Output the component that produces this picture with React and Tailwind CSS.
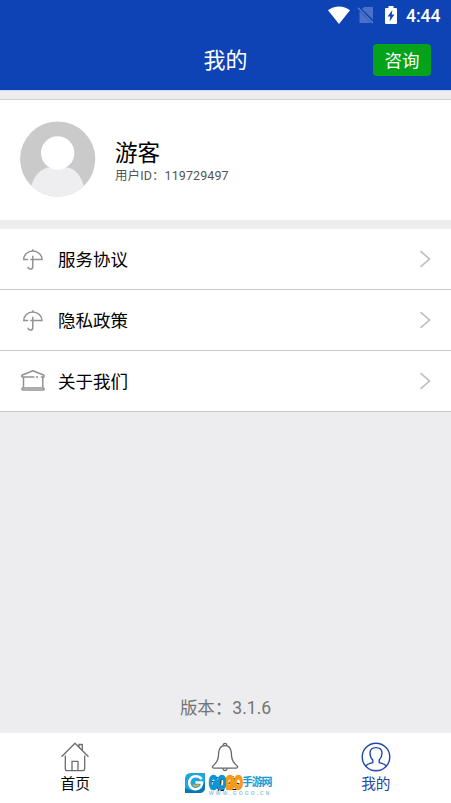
import React from 'react';

const menuItems = [
  { label: '服务协议', icon: 'umbrella' },
  { label: '隐私政策', icon: 'umbrella' },
  { label: '关于我们', icon: 'house' },
];

const UmbrellaIcon = () => (
  <svg width="24" height="24" viewBox="0 0 24 24" fill="none" stroke="#929292" strokeWidth="1.5">
    <path d="M2.7 12.8C2.7 7.5 6.7 4.1 11.8 4.1S21 7.5 21 12.8M2.1 12.6H7.2M9.3 12.6H21.6M11.8 2.3V4.1M11.8 8.8V19.7C11.8 22.9 7 22.9 7 19.7" />
  </svg>
);

const HouseIcon = () => (
  <svg width="24" height="24" viewBox="0 0 24 24" fill="none" stroke="#929292" strokeWidth="1.5" strokeLinejoin="round">
    <path d="M.8 7.9V6.2L11.9 1.7L23 6.2V7.9H19.8M.8 7.9H13.5M15 7.9H17M2.5 7.9V18.7M21.8 7.9V18.7" />
    <rect x=".9" y="18.9" width="22.3" height="2.2" rx="1" />
  </svg>
);

const ChevronIcon = () => (
  <svg width="12" height="18" viewBox="0 0 12 18" fill="none" stroke="#bcbcbc" strokeWidth="1.6">
    <path d="M1.5 1.2L10.5 9L1.5 16.8" />
  </svg>
);

const StatusBar = () => (
  <div className="flex h-[30px] items-center text-white">
    <svg className="ml-[328px] -mt-px" width="22" height="18" viewBox="0 0 22 18" fill="currentColor">
      <path d="M0 4.3C6-.9 16-.9 22 4.3L11 18Z" />
    </svg>
    <svg className="ml-[7px]" width="18" height="18" viewBox="0 0 18 18">
      <path d="M7 1H16V13.5L5 3Z M2.5 5L14.5 17H2.5Z" fill="#4a70c8" />
      <path d="M1 1.7L16 17" stroke="#5b7dca" strokeWidth="1.3" />
    </svg>
    <svg className="ml-[10px]" width="12" height="18" viewBox="0 0 12 18">
      <path d="M3.5 0H8.5V2H11Q12 2 12 3V17Q12 18 11 18H1Q0 18 0 17V3Q0 2 1 2H3.5Z" fill="white" />
      <path d="M7.4 4L2.6 10.6H5.3L4.6 15.5L9.4 8.6H6.7Z" fill="#0e43b5" />
    </svg>
    <span className="ml-[9px] mt-[3px] font-['Roboto'] text-[17.5px] font-medium leading-none">4:44</span>
  </div>
);

const Header = () => (
  <header className="h-[91px] shrink-0 border-b border-[#ccd8f5] bg-[#0e43b5]">
    <StatusBar />
    <div className="grid h-[60px] grid-cols-3 items-center">
      <h1 className="col-start-2 -mt-[4px] text-center text-[22px] leading-none text-white">我的</h1>
      <button className="mr-5 flex h-8 w-[58px] items-center justify-center justify-self-end rounded-[4px] bg-[#05a31c] text-[17.5px] leading-none text-white">
        咨询
      </button>
    </div>
  </header>
);

const Profile = () => (
  <section className="flex h-[121px] shrink-0 border-t border-[#d2d2d2] bg-white pl-5">
    <svg className="mt-[21px]" width="76" height="76" viewBox="0 0 76 76">
      <defs>
        <clipPath id="avatar">
          <circle cx="37.7" cy="38" r="37.6" />
        </clipPath>
      </defs>
      <g clipPath="url(#avatar)">
        <rect width="76" height="76" fill="#cacaca" />
        <path d="M10 70C13 54 22 46.5 30 46.5H46C54 46.5 62 54 65 70V76H10Z" fill="#eeeef0" />
        <circle cx="37.7" cy="32" r="16.7" fill="white" />
      </g>
    </svg>
    <div className="ml-[19px] pt-[38px]">
      <h2 className="text-[22.5px] leading-[26px] text-black">游客</h2>
      <p className="mt-[4px] font-['Roboto','Noto_Sans_CJK_SC',sans-serif] text-[12.5px] leading-4 tracking-[0.1px] text-[#555]">用户ID：119729497</p>
    </div>
  </section>
);

const HomeIcon = () => (
  <svg width="30" height="30" viewBox="0 0 30 30" fill="none" stroke="#6b6b6b" strokeWidth="1.3" strokeLinejoin="round">
    <path d="M1.5 14.7L15 1.2L28.5 14.7M19 5V2.5H22.3V8.2M5.3 13.5V26.5Q5.3 28.7 7.5 28.7H22.5Q24.7 28.7 24.7 26.5V13.5M12 28.5V19.3H18V28.5" />
  </svg>
);

const BellIcon = () => (
  <svg width="30" height="30" viewBox="0 0 30 30" fill="none" stroke="#666" strokeWidth="1.3" strokeLinejoin="round">
    <path d="M15 3.7C9.8 3.7 8.5 8 8.5 13C8.5 18.5 6 21.5 2.5 24.2Q2.1 26.1 4 26.1H26Q27.9 26.1 27.5 24.2C24 21.5 21.5 18.5 21.5 13C21.5 8 20.2 3.7 15 3.7Z" />
    <path d="M13.3 3.8A1.8 1.8 0 1 1 16.7 3.8M12.4 26.3Q15 31 17.6 26.3" />
  </svg>
);

const UserIcon = () => (
  <svg width="30" height="30" viewBox="0 0 30 30" fill="none" stroke="#2148a4" strokeWidth="1.4" strokeLinejoin="round">
    <circle cx="15" cy="15" r="13.8" />
    <path d="M4.5 24C6.5 21.7 9 21.3 11.8 20.5V18C9.8 16 9 13.5 9 11C9 7.5 11 5.6 15 5.6S21 7.5 21 11C21 13.5 20.2 16 18.2 18V20.5C21 21.3 23.5 21.7 25.5 24" />
  </svg>
);

const Watermark = () => (
  <div className="absolute left-[185px] top-[40px] flex h-[26px] w-[88px]">
    <svg className="shrink-0" width="21" height="20" viewBox="0 0 21 20">
      <path d="M6 0H20V14Q20 20 14 20H0V6Q0 0 6 0Z" fill="#1fa6dc" />
      <path d="M0 15Q12 22 20 9V14Q20 20 14 20H0Z" fill="#0876b4" />
      <path d="M16.6 6.2C13.6 2.3 7.6 2.5 5.2 6.3C2.4 11 6 16.6 11 16.3C14.8 16 17.3 13.1 17 9.6H10.5" fill="none" stroke="white" strokeWidth="2.5" />
      <path d="M8.2 11.6C9.6 13.4 12.2 13.2 13.6 11.6" fill="none" stroke="#ffa319" strokeWidth="1.8" />
    </svg>
    <div className="ml-[3px]">
      <div className="flex h-[18px] items-center whitespace-nowrap leading-none">
        <span className="w-[33px] font-['Liberation_Sans',sans-serif] text-[19px] font-bold">
          <span className="inline-block origin-left scale-x-[0.57]">
            <span className="text-[#0b95d5] [-webkit-text-stroke:2.6px_#0b95d5]">GO</span>
            <span className="text-[#f59b16] [-webkit-text-stroke:2.6px_#f59b16]">GO</span>
          </span>
        </span>
        <span className="-mt-px text-[11px] font-bold tracking-[-1.2px] text-[#159bd5]">手游网</span>
      </div>
      <div className="font-['Liberation_Sans',sans-serif] text-[5px] font-bold leading-[5px] tracking-[2.1px] text-[#8cc8e6]">WWW.GOGO.CN</div>
    </div>
  </div>
);

const TabBar = () => (
  <nav className="relative grid h-[70px] shrink-0 grid-cols-3 bg-white text-[14.7px] leading-none">
    <div className="flex flex-col items-center pt-[9px] text-black">
      <HomeIcon />
      <span className="mt-[4px]">首页</span>
    </div>
    <div className="flex flex-col items-center pt-[9px] text-black">
      <BellIcon />
      <span className="mt-[4px]">动态</span>
    </div>
    <div className="flex flex-col items-center pt-[9px] text-[#2148a4]">
      <UserIcon />
      <span className="mt-[4px]">我的</span>
    </div>
    <Watermark />
  </nav>
);

export default function App() {
  return (
    <div className="flex h-[803px] w-[451px] flex-col overflow-hidden bg-[#ededef] font-['Noto_Sans_CJK_SC',sans-serif]">
      <Header />
      <div className="h-2 shrink-0" />
      <Profile />
      <main className="mt-[9px] shrink-0">
        {menuItems.map((item) => (
          <button
            key={item.label}
            className="flex h-[61px] w-full items-center border-b border-[#c8c8c8] bg-white pl-[21px] pr-5"
          >
            {item.icon === 'umbrella' ? <UmbrellaIcon /> : <HouseIcon />}
            <span className="-mt-px ml-[13px] text-[17.5px] leading-none text-black">{item.label}</span>
            <span className="ml-auto">
              <ChevronIcon />
            </span>
          </button>
        ))}
      </main>
      <div className="flex flex-1 items-end justify-center pb-[15px] font-['Roboto','Noto_Sans_CJK_SC',sans-serif] text-[17.5px] leading-5 text-[#747474]">
        版本：3.1.6
      </div>
      <TabBar />
    </div>
  );
}
